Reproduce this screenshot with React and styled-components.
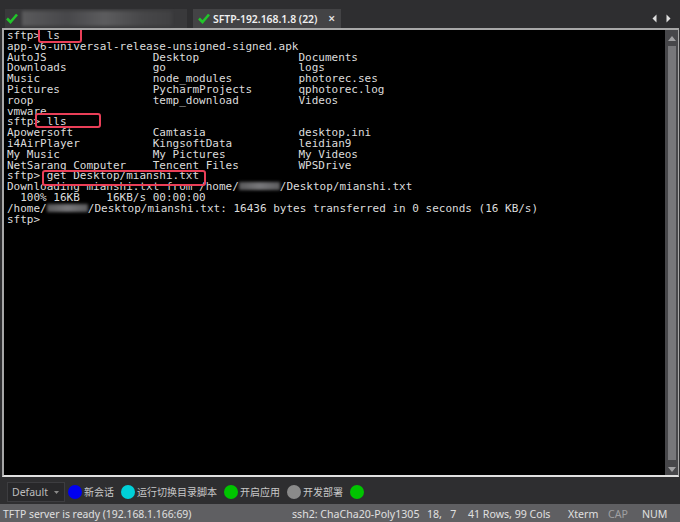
import React from 'react'
import styled, { createGlobalStyle } from 'styled-components'

const GlobalStyle = createGlobalStyle`
  html, body {
    margin: 0;
    padding: 0;
    background: #2d2d30;
  }
`

const Window = styled.div`
  width: 680px;
  height: 522px;
  display: flex;
  flex-direction: column;
  overflow: hidden;
  background: #2e2e30;
  font-family: "Noto Sans", "Noto Sans CJK SC", sans-serif;
`

const TabBar = styled.div`
  height: 28px;
  flex: none;
  box-sizing: border-box;
  padding: 9px 9px 0 5px;
  display: flex;
  align-items: stretch;
  gap: 6px;
`

const Tab = styled.div`
  width: ${({ wide }) => wide}px;
  display: flex;
  align-items: center;
  gap: 3px;
  padding: 0 6px 0 ${({ active }) => (active ? 5 : 1)}px;
  box-sizing: border-box;
  background: ${({ active }) => (active ? '#434345' : '#39393b')};
  color: #f0f0f0;
  font-size: 10.4px;
  font-weight: 600;
  white-space: nowrap;
`

const BlurredTitle = styled.div`
  width: 150px;
  height: 15px;
  margin-left: 1px;
  background: linear-gradient(90deg, #5a5a5c, #47474a 30%, #5c5c5e 55%, #474749 80%, #404042);
  filter: blur(1.5px);
`

const CloseMark = styled.span`
  margin-left: auto;
  margin-right: 0;
  font-size: 12px;
  color: #e8e8e8;
`

const TabArrows = styled.div`
  margin-left: auto;
  display: flex;
  align-items: center;
  gap: 9px;
`

const Terminal = styled.div`
  height: 449px;
  flex: none;
  box-sizing: border-box;
  display: flex;
  margin: 0 1px 0 2px;
  border: 2px solid #a8a8a8;
  border-width: 2px 1px 2px 2px;
  border-bottom-color: #e0e0e0;
  background: #000;
`

const Screen = styled.div`
  flex: 1;
  position: relative;
  padding: 1px 0 0 3px;
  overflow: hidden;
`

const Line = styled.div`
  height: 10.8px;
  line-height: 10.8px;
  font-family: "DejaVu Sans Mono", "Liberation Mono", monospace;
  font-size: 11px;
  color: #dcdcdc;
  white-space: pre;
`

const Mask = styled.span`
  display: inline-block;
  width: ${({ chars }) => chars * 6.62}px;
  height: 8px;
  background: linear-gradient(90deg, #59595b, #77777a 50%, #5c5c5e);
  filter: blur(1.5px);
`

const Highlight = styled.div`
  position: absolute;
  left: ${({ x }) => x}px;
  top: ${({ y }) => y}px;
  width: ${({ w }) => w}px;
  height: ${({ h }) => h}px;
  box-sizing: border-box;
  border: 2px solid #ea3f58;
  border-radius: 3px;
`

const Scrollbar = styled.div`
  width: 13px;
  flex: none;
  display: flex;
  flex-direction: column;
  align-items: center;
  justify-content: space-between;
  background: #47474a;
  padding: 6px 0 3px;
  box-sizing: border-box;
`

const ScrollThumb = styled.div`
  width: 8px;
  flex: 1;
  margin: 5px 0 7px;
  background: #77777a;
`

const ToolRow = styled.div`
  height: 27px;
  flex: none;
  display: flex;
  align-items: center;
  padding: 3px 0 0 7px;
  box-sizing: border-box;
  background: #2e2e30;
  color: #c8c8c8;
  font-size: 10px;
`

const SessionSelect = styled.div`
  width: 58px;
  height: 20px;
  box-sizing: border-box;
  display: flex;
  align-items: center;
  justify-content: space-between;
  padding: 0 5px 0 4px;
  margin-right: 3px;
  border: 1px solid #3d3d40;
  background: #28282a;
  color: #bdbdbd;
  font-size: 10.5px;
`

const QuickButton = styled.div`
  display: flex;
  align-items: center;
  gap: 2px;
  margin-right: 7px;
  margin-top: -1px;
  font-family: "Noto Sans CJK SC", sans-serif;
`

const Dot = styled.span`
  width: 14px;
  height: 14px;
  border-radius: 50%;
  background: ${({ color }) => color};
`

const StatusBar = styled.div`
  height: 18px;
  flex: none;
  box-sizing: border-box;
  display: flex;
  align-items: center;
  padding: 2px 0 0 3px;
  background: #5f5f62;
  color: #e0e0e0;
  white-space: pre;
`

const StatusText = styled.span`
  width: ${({ w }) => w}px;
  flex: none;
  font-size: ${({ size }) => size}px;
  color: ${({ dim }) => (dim ? '#a0a0a2' : 'inherit')};
`

const Check = () => (
  <svg width="12" height="11" viewBox="0 0 12 11">
    <path d="M1 5.5 L4.5 9 L11 1.5" fill="none" stroke="#22c52a" strokeWidth="2.6" />
  </svg>
)

const Arrow = ({ flip }) => (
  <svg width="5" height="9" viewBox="0 0 5 9" style={flip ? { transform: 'scaleX(-1)' } : undefined}>
    <path d="M4.5 0.5 V8.5 L0.5 4.5 Z" fill="#e0e0e0" />
  </svg>
)

const ScrollArrow = ({ down }) => (
  <svg width="8" height="5" viewBox="0 0 8 5">
    <path d={down ? 'M0 0 L4 5 L8 0 Z' : 'M0 5 L4 0 L8 5 Z'} fill="#a0a0a2" />
  </svg>
)

const col = (a, b, c = '') => a.padEnd(22) + b.padEnd(22) + c

const lines = [
  ['sftp> ls'],
  ['app-v6-universal-release-unsigned-signed.apk'],
  [col('AutoJS', 'Desktop', 'Documents')],
  [col('Downloads', 'go', 'logs')],
  [col('Music', 'node_modules', 'photorec.ses')],
  [col('Pictures', 'PycharmProjects', 'qphotorec.log')],
  [col('roop', 'temp_download', 'Videos')],
  ['vmware'],
  ['sftp> lls'],
  [col('Apowersoft', 'Camtasia', 'desktop.ini')],
  [col('i4AirPlayer', 'KingsoftData', 'leidian9')],
  [col('My Music', 'My Pictures', 'My Videos')],
  [col('NetSarang Computer', 'Tencent Files', 'WPSDrive')],
  ['sftp> get Desktop/mianshi.txt'],
  ['Downloading mianshi.txt from /home/', 6.2, '/Desktop/mianshi.txt'],
  ['  100% 16KB    16KB/s 00:00:00'],
  ['/home/', 6.2, '/Desktop/mianshi.txt: 16436 bytes transferred in 0 seconds (16 KB/s)'],
  ['sftp>'],
]

const marks = [
  { x: 34, y: -3, w: 44, h: 16 },
  { x: 31, y: 83, w: 66, h: 15 },
  { x: 38, y: 140, w: 164, h: 16 },
]

const quick = [
  ['#0000f0', '新会话'],
  ['#00d0d8', '运行切换目录脚本'],
  ['#00c400', '开启应用'],
  ['#8a8a8a', '开发部署'],
  ['#00c400', ''],
]

const status = [
  ['TFTP server is ready (192.168.1.166:69)', 289, 10.4],
  ['ssh2: ChaCha20-Poly1305', 135, 10.6],
  ['18,   7', 41, 10.6],
  ['41 Rows, 99 Cols', 100, 10.6],
  ['Xterm', 40, 10.6],
]

export default function App() {
  return (
    <Window>
      <GlobalStyle />
      <TabBar>
        <Tab wide={182}>
          <Check />
          <BlurredTitle />
        </Tab>
        <Tab wide={148} active>
          <Check />
          SFTP-192.168.1.8 (22)
          <CloseMark>×</CloseMark>
        </Tab>
        <TabArrows>
          <Arrow />
          <Arrow flip />
        </TabArrows>
      </TabBar>
      <Terminal>
        <Screen>
          {lines.map((parts, i) => (
            <Line key={i}>
              {parts.map((part, j) =>
                typeof part === 'number' ? <Mask key={j} chars={part} /> : part
              )}
            </Line>
          ))}
          {marks.map((m, i) => (
            <Highlight key={i} {...m} />
          ))}
        </Screen>
        <Scrollbar>
          <ScrollArrow />
          <ScrollThumb />
          <ScrollArrow down />
        </Scrollbar>
      </Terminal>
      <ToolRow>
        <SessionSelect>
          Default
          <svg width="5" height="3" viewBox="0 0 5 3">
            <path d="M0 0 H5 L2.5 3 Z" fill="#8a8a8a" />
          </svg>
        </SessionSelect>
        {quick.map(([color, label], i) => (
          <QuickButton key={i}>
            <Dot color={color} />
            {label}
          </QuickButton>
        ))}
      </ToolRow>
      <StatusBar>
        {status.map(([text, w, size]) => (
          <StatusText key={text} w={w} size={size}>{text}</StatusText>
        ))}
        <StatusText w={34} size={10.6} dim>CAP</StatusText>
        <StatusText w={28} size={10.6}>NUM</StatusText>
      </StatusBar>
    </Window>
  )
}
